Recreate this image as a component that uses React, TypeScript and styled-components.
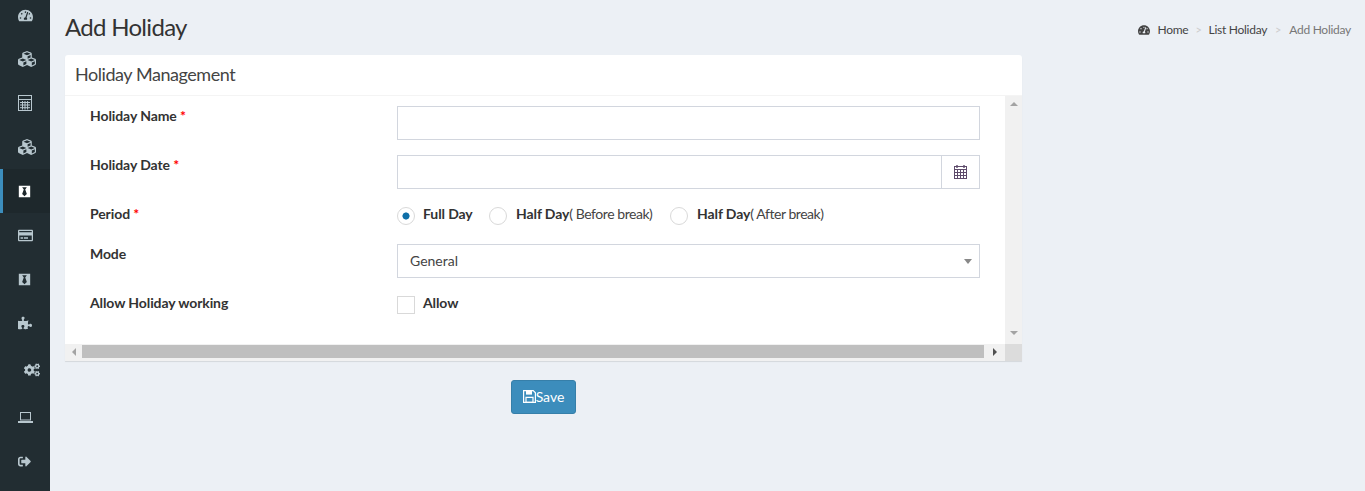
import React from "react";
import styled, { createGlobalStyle } from "styled-components";
import {
  FaTachometerAlt, FaCubes, FaBlackTie, FaRegCreditCard, FaPuzzlePiece,
  FaCogs, FaSignOutAlt,
} from "react-icons/fa";

const Global = createGlobalStyle`
  html, body { margin: 0; padding: 0; height: 100%; }
  body { background: #ecf0f5; font-family: "Lato", "Noto Sans", sans-serif; font-size: 14px; color: #333; }
  #root { height: 491px; overflow: hidden; }
  * { box-sizing: border-box; }
`;

const Shell = styled.div`display: flex; height: 491px;`;
const Sidebar = styled.nav`
  width: 50px; flex: none; background: #222d32; display: flex; flex-direction: column;
  color: #b8c7ce;
`;
const NavItem = styled.a<{ $active?: boolean; $h?: number; $shift?: number; $drop?: number }>`
  height: ${(p) => p.$h ?? 44}px; display: flex; align-items: center;
  padding-left: ${(p) => (p.$shift ?? 18)}px;
  padding-bottom: ${(p) => p.$drop ?? 0}px;
  border-left: 3px solid ${(p) => (p.$active ? "#3c8dbc" : "transparent")};
  background: ${(p) => (p.$active ? "#1e282c" : "transparent")};
  color: ${(p) => (p.$active ? "#fff" : "#b8c7ce")};
  & > svg { margin-left: -3px; display: block; }
`;
const Main = styled.main`flex: 1; min-width: 0; padding: 0 14px 0 15px;`;
const Head = styled.header`display: flex; justify-content: space-between; height: 55px;`;
const Title = styled.h1`margin: 13px 0 0; font-size: 24px; line-height: 28px; font-weight: 400; color: #333; letter-spacing: -0.7px;`;
const Crumbs = styled.ol`
  list-style: none; margin: 21px 0 0; padding: 0; display: flex; align-items: center;
  font-size: 12px; line-height: 18px; color: #444; height: 18px; letter-spacing: -0.27px;
`;
const Crumb = styled.li<{ $muted?: boolean }>`
  display: flex; align-items: center; color: ${(p) => (p.$muted ? "#777" : "#444")};
  & > svg { margin-right: 7px; }
`;
const Sep = styled.span<{ $gap: number }>`color: #ccc; margin: 0 ${(p) => p.$gap}px; font-size: 11px;`;
const Card = styled.section`
  width: 957px; background: #fff; border-radius: 3px 3px 0 0; box-shadow: 0 1px 1px rgba(0,0,0,.1);
`;
const CardHead = styled.div`
  height: 41px; border-bottom: 1px solid #f4f4f4; padding: 0 10px 2px; display: flex; align-items: center;
`;
const CardTitle = styled.h3`margin: 0; font-size: 18px; font-weight: 400; color: #444; line-height: 38px; letter-spacing: -0.45px;`;
const Scroller = styled.div`
  display: grid; grid-template-columns: 940px 17px; grid-template-rows: 248px 17px;
`;
const Form = styled.form`padding: 10px 0 0 25px;`;
const Row = styled.div<{ $h?: number }>`
  display: grid; grid-template-columns: 307px 583px; height: ${(p) => p.$h ?? 34}px; margin-bottom: 15px;
`;
const Label = styled.label`font-weight: 700; line-height: 20px; color: #333; letter-spacing: -0.1px;`;
const Req = styled.span`color: #f00;`;
const Input = styled.input`
  width: 100%; height: 34px; border: 1px solid #d2d6de; padding: 6px 12px; outline: none;
  font: inherit; background: #fff; display: block; min-width: 0;
`;
const Group = styled.div`display: flex;`;
const Addon = styled.span`
  width: 38px; flex: none; height: 34px; border: 1px solid #d2d6de; border-left: 0;
  display: flex; align-items: center; justify-content: center;
`;
const SelectWrap = styled.div`position: relative;`;
const Select = styled.select`
  width: 100%; height: 34px; border: 1px solid #d2d6de; padding: 0 12px 2px; appearance: none; outline: none;
  font: inherit; color: #444; background: #fff; border-radius: 0;
`;
const Caret = styled.span`
  position: absolute; right: 8px; top: 15px; width: 0; height: 0;
  border-left: 4px solid transparent; border-right: 4px solid transparent; border-top: 5px solid #888;
`;
const Options = styled.div`display: flex; align-items: flex-start;`;
const Opt = styled.label<{ $w: number; $gap: number }>`
  width: ${(p) => p.$w}px; flex: none; display: flex; align-items: flex-start; gap: ${(p) => p.$gap}px;
  line-height: 20px; color: #444; letter-spacing: -0.45px;
  & b { color: #333; letter-spacing: -0.1px; }
`;
const Radio = styled.span<{ $on?: boolean }>`
  width: 18px; height: 18px; border: 1px solid #d9d9d9; border-radius: 50%; flex: none; margin-top: 3px;
  background: ${(p) => (p.$on ? "radial-gradient(circle, #0f6fa8 0 3.2px, #fff 3.9px)" : "#fff")};
`;
const Check = styled.span`width: 18px; height: 18px; border: 1px solid #d9d9d9; background: #fff; flex: none; margin-top: 3px;`;
const VBar = styled.div`
  background: #f1f1f1; display: flex; flex-direction: column; justify-content: space-between; align-items: center;
  padding: 6px 0 9px;
`;
const HBar = styled.div`background: #f1f1f1; display: flex; align-items: center; padding: 1px 0 3px;`;
const Thumb = styled.div`flex: 1; height: 13px; background: #bfbfbf;`;
const HEnd = styled.div`width: 17px; height: 13px; display: flex; align-items: center; justify-content: center;`;
const HEndR = styled(HEnd)`width: 21px;`;
const Corner = styled.div`background: #dcdcdc;`;
const Arrow = styled.span<{ $d: "u" | "d" | "l" | "r"; $c: string }>`
  width: 0; height: 0; display: block;
  ${(p) => p.$d === "u" && `border-left:4px solid transparent;border-right:4px solid transparent;border-bottom:4px solid ${p.$c};`}
  ${(p) => p.$d === "d" && `border-left:4px solid transparent;border-right:4px solid transparent;border-top:4px solid ${p.$c};`}
  ${(p) => p.$d === "l" && `border-top:4px solid transparent;border-bottom:4px solid transparent;border-right:4px solid ${p.$c};`}
  ${(p) => p.$d === "r" && `border-top:4px solid transparent;border-bottom:4px solid transparent;border-left:4px solid ${p.$c};`}
`;
const Actions = styled.div`padding: 19px 0 0 446px;`;
const SaveBtn = styled.button`
  width: 65px; height: 34px; border: 1px solid #367fa9; background: #3c8dbc; color: #fff; border-radius: 3px;
  font: inherit; display: flex; align-items: center; justify-content: center; padding: 0 0 2px;
  & > svg { margin-top: 1px; }
`;

const Calculator = () => (
  <svg width="14" height="16" viewBox="0 0 14 16" fill="none" stroke="currentColor" strokeWidth="1">
    <rect x=".5" y=".5" width="13" height="15" />
    <path d="M.5 4.5h13M2 7.5h10M2 10h10M2 12.7h10M4.5 6v8.5M7 6v8.5M9.6 6v8.5" />
  </svg>
);
const Laptop = () => (
  <svg width="15" height="11" viewBox="0 0 15 11" fill="none" stroke="currentColor">
    <rect x="2.5" y=".5" width="10" height="7.5" />
    <path d="M0 10h15" strokeWidth="2" />
  </svg>
);
const CalendarIcon = () => (
  <svg width="13" height="14" viewBox="0 0 13 14" fill="none" stroke="#5e4b6b" strokeWidth="1">
    <rect x=".5" y="1.5" width="12" height="12" />
    <path d="M.5 4.5h12M.5 7.5h12M.5 10.5h12M3.5 4.5v9M6.5 4.5v9M9.5 4.5v9" />
    <path d="M3 0v3M10 0v3" strokeWidth="1.4" />
  </svg>
);
const FloppyIcon = () => (
  <svg width="13" height="13" viewBox="0 0 13 13" fill="none" stroke="#fff" strokeWidth="1.2">
    <path d="M.6.6h9.6l2.2 2.2v9.6H.6z" />
    <path d="M3 1v3.6h6V1" fill="#fff" stroke="none" />
    <path d="M3 7.4h7v5H3z" />
  </svg>
);

export default function App() {
  return (
    <Shell>
      <Global />
      <Sidebar>
        <NavItem $h={37} $drop={7}><FaTachometerAlt size={15} /></NavItem>
        <NavItem><FaCubes size={18} /></NavItem>
        <NavItem><Calculator /></NavItem>
        <NavItem><FaCubes size={18} /></NavItem>
        <NavItem $active><FaBlackTie size={13} /></NavItem>
        <NavItem><FaRegCreditCard size={15} /></NavItem>
        <NavItem><FaBlackTie size={13} /></NavItem>
        <NavItem><FaPuzzlePiece size={14} /></NavItem>
        <NavItem $h={50} $shift={24}><FaCogs size={16} /></NavItem>
        <NavItem><Laptop /></NavItem>
        <NavItem><FaSignOutAlt size={13} /></NavItem>
      </Sidebar>
      <Main>
        <Head>
          <Title>Add Holiday</Title>
          <Crumbs>
            <Crumb><FaTachometerAlt size={12} />Home</Crumb>
            <Sep $gap={7}>&gt;</Sep>
            <Crumb>List Holiday</Crumb>
            <Sep $gap={8}>&gt;</Sep>
            <Crumb $muted>Add Holiday</Crumb>
          </Crumbs>
        </Head>
        <Card>
          <CardHead><CardTitle>Holiday Management</CardTitle></CardHead>
          <Scroller>
            <Form>
              <Row>
                <Label>Holiday Name <Req>*</Req></Label>
                <Input />
              </Row>
              <Row>
                <Label>Holiday Date <Req>*</Req></Label>
                <Group>
                  <Input />
                  <Addon><CalendarIcon /></Addon>
                </Group>
              </Row>
              <Row $h={25}>
                <Label>Period <Req>*</Req></Label>
                <Options>
                  <Opt $w={92} $gap={8}><Radio $on /><b>Full Day</b></Opt>
                  <Opt $w={181} $gap={9}><Radio /><span><b>Half Day</b>( Before break)</span></Opt>
                  <Opt $w={200} $gap={9}><Radio /><span><b>Half Day</b>( After break)</span></Opt>
                </Options>
              </Row>
              <Row>
                <Label>Mode</Label>
                <SelectWrap>
                  <Select defaultValue="General"><option>General</option></Select>
                  <Caret />
                </SelectWrap>
              </Row>
              <Row $h={22}>
                <Label>Allow Holiday working</Label>
                <Options>
                  <Opt $w={120} $gap={8}><Check /><b>Allow</b></Opt>
                </Options>
              </Row>
            </Form>
            <VBar><Arrow $d="u" $c="#a3a3a3" /><Arrow $d="d" $c="#a3a3a3" /></VBar>
            <HBar>
              <HEnd><Arrow $d="l" $c="#a3a3a3" /></HEnd>
              <Thumb />
              <HEndR><Arrow $d="r" $c="#505050" /></HEndR>
            </HBar>
            <Corner />
          </Scroller>
        </Card>
        <Actions>
          <SaveBtn><FloppyIcon />Save</SaveBtn>
        </Actions>
      </Main>
    </Shell>
  );
}
